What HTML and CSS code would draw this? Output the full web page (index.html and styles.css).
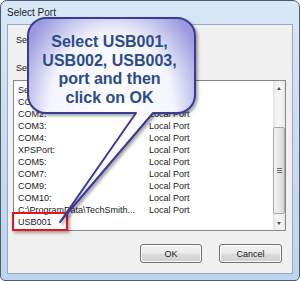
FILE: index.html
```html
<!DOCTYPE html>
<html lang="en">
<head>
  <meta charset="UTF-8">
  <title>Select Port</title>
  <link rel="stylesheet" href="styles.css">
</head>
<body>
<div class="window">
  <div class="titlebar">Select Port</div>
  <div class="client">
    <p class="label first">Select</p>
    <p class="label">Select</p>
    <div class="listbox">
      <div class="rows">
        <div class="row"><span class="name">Select</span><span class="desc"></span></div>
        <div class="row"><span class="name">COM1:</span><span class="desc">Local Port</span></div>
        <div class="row"><span class="name">COM2:</span><span class="desc">Local Port</span></div>
        <div class="row"><span class="name">COM3:</span><span class="desc">Local Port</span></div>
        <div class="row"><span class="name">COM4:</span><span class="desc">Local Port</span></div>
        <div class="row"><span class="name">XPSPort:</span><span class="desc">Local Port</span></div>
        <div class="row"><span class="name">COM5:</span><span class="desc">Local Port</span></div>
        <div class="row"><span class="name">COM7:</span><span class="desc">Local Port</span></div>
        <div class="row"><span class="name">COM9:</span><span class="desc">Local Port</span></div>
        <div class="row"><span class="name">COM10:</span><span class="desc">Local Port</span></div>
        <div class="row"><span class="name">C:\ProgramData\TechSmith...</span><span class="desc">Local Port</span></div>
        <div class="row"><span class="name">USB001</span><span class="desc"></span></div>
      </div>
      <div class="scrollbar">
        <div class="arrow up"></div>
        <div class="track">
          <div class="thumb"><span class="grip"></span></div>
        </div>
        <div class="arrow down"></div>
      </div>
      <div class="highlight"></div>
    </div>
    <div class="buttons">
      <button class="btn">OK</button>
      <button class="btn">Cancel</button>
    </div>
  </div>

  <!-- callout over the dialog -->
  <svg class="callout" width="300" height="281" viewBox="0 0 300 281">
    <defs>
      <radialGradient id="bubble" cx="0.5" cy="0.45" r="0.6">
        <stop offset="0" stop-color="#ffffff"/>
        <stop offset="0.62" stop-color="#f4f4fd"/>
        <stop offset="1" stop-color="#9a9ade"/>
      </radialGradient>
      <filter id="shadow" x="-10%" y="-10%" width="130%" height="130%">
        <feDropShadow dx="2" dy="2" stdDeviation="1.5" flood-color="#000" flood-opacity="0.35"/>
      </filter>
    </defs>
    <path d="M46 18 H177 A18 18 0 0 1 195 36 V95 A18 18 0 0 1 177 113 H153 L60 222 L136 113 H46 A18 18 0 0 1 28 95 V36 A18 18 0 0 1 46 18 Z"
          fill="url(#bubble)" stroke="#3b3b92" stroke-width="2" stroke-linejoin="round" filter="url(#shadow)"/>
  </svg>
  <div class="callout-text">Select USB001,<br>USB002, USB003,<br>port and then<br>click on OK</div>
</div>
</body>
</html>
```

FILE: styles.css
```css
body {
  margin: 0;
  font-family: "Liberation Sans", Arial, sans-serif;
}
.window {
  position: relative;
  width: 300px;
  height: 281px;
  box-sizing: border-box;
  display: flex;
  flex-direction: column;
  padding: 0 6px 6px;
  border: 1px solid #4f5b69;
  border-radius: 7px 7px 5px 5px;
  background: linear-gradient(to bottom, #d9e8f8, #cadef3 40%, #bdd4ee);
  overflow: hidden;
}
.titlebar {
  height: 23px;
  line-height: 23px;
  font-size: 10px;
  color: #1c1c1c;
}
.client {
  flex: 1;
  display: flex;
  flex-direction: column;
  border: 1px solid #97a9bf;
  background: #f0f0f0;
}
.label {
  margin: 16px 0 0 8px;
  font-size: 9px;
  line-height: 12px;
  color: #1a1a1a;
}
.label.first {
  margin-top: 9px;
}
.listbox {
  position: relative;
  display: flex;
  height: 151px;
  box-sizing: border-box;
  margin: 6px 6px 0 5px;
  border: 1px solid #828790;
  background: #fff;
}
.rows {
  flex: 1;
  padding-top: 3px;
  overflow: hidden;
}
.row {
  display: flex;
  height: 12px;
  line-height: 12px;
  padding-left: 4px;
  font-size: 9px;
  color: #1a1a1a;
  white-space: nowrap;
}
.row .name {
  width: 131px;
}
.scrollbar {
  width: 12px;
  display: flex;
  flex-direction: column;
  background: linear-gradient(to right, #e3e3e3, #f3f3f3 30%, #f3f3f3 70%, #e6e6e6);
}
.arrow {
  height: 16px;
  position: relative;
}
.arrow::after {
  content: "";
  position: absolute;
  left: 4px;
  border-left: 2.5px solid transparent;
  border-right: 2.5px solid transparent;
}
.arrow.up::after {
  top: 6px;
  border-bottom: 3px solid #4d4d4d;
}
.arrow.down::after {
  top: 8px;
  border-top: 3px solid #4d4d4d;
}
.track {
  flex: 1;
}
.thumb {
  height: 87px;
  margin-top: 30px;
  box-sizing: border-box;
  border: 1px solid #a5a5a5;
  border-radius: 2px;
  background: linear-gradient(to right, #f3f3f3, #e8e8e8 50%, #d6d6d6);
  display: flex;
  align-items: center;
  justify-content: center;
}
.grip {
  width: 5px;
  height: 5px;
  background: repeating-linear-gradient(to bottom, #6f6f6f 0 1px, transparent 1px 2px);
}
.highlight {
  position: absolute;
  left: -2px;
  top: 131px;
  width: 52px;
  height: 15px;
  border: 2px solid #e8141b;
  box-shadow: 2px 2px 3px rgba(0, 0, 0, 0.35);
}
.buttons {
  display: flex;
  justify-content: flex-end;
  gap: 17px;
  margin: 13px 10px 0 0;
}
.btn {
  width: 62px;
  height: 19px;
  padding: 0;
  font-family: "Liberation Sans", Arial, sans-serif;
  font-size: 9px;
  color: #1a1a1a;
  border: 1px solid #707070;
  border-radius: 3px;
  background: linear-gradient(to bottom, #f2f2f2, #ebebeb 48%, #dddddd 52%, #cfcfcf);
  box-shadow: inset 0 0 0 1px #fcfcfc;
}
.btn + .btn {
  width: 63px;
}
.callout {
  position: absolute;
  left: -1px;
  top: -1px;
  pointer-events: none;
}
.callout-text {
  position: absolute;
  left: 25px;
  top: 32px;
  width: 167px;
  text-align: center;
  font-weight: bold;
  font-size: 16px;
  line-height: 18.5px;
  color: #2b4b8c;
}
```
